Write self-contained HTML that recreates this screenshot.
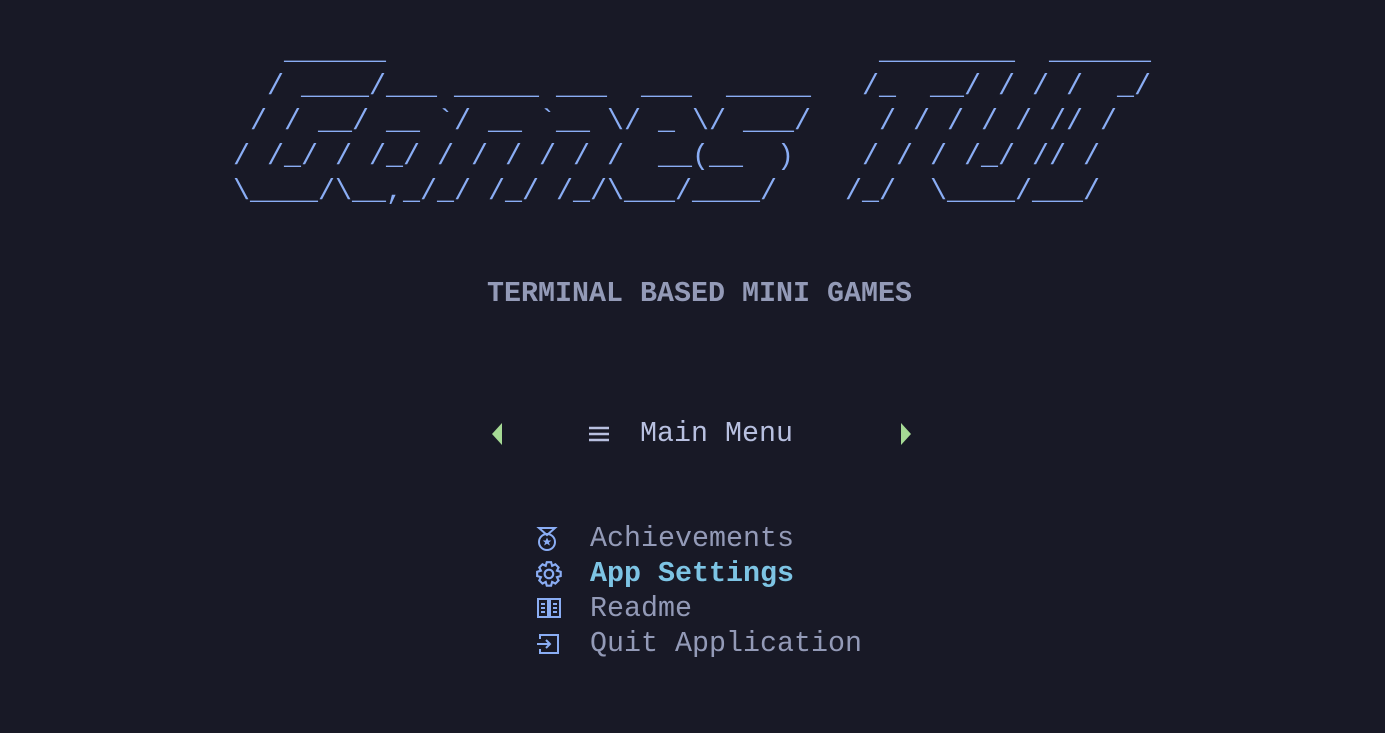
<!DOCTYPE html>
<html><head><meta charset="utf-8"><style>
html,body{margin:0;padding:0;background:#181926;width:1385px;height:733px;overflow:hidden}
.t{position:absolute;margin:0;font-family:"Liberation Mono",monospace;font-size:28.33px;line-height:35px;white-space:pre}
.a{color:#8aadf4;left:233px;top:34px}
svg{position:absolute}
</style></head><body>
<pre class="t a">   ______                             ________  ______
  / ____/___ _____ ___  ___  _____   /_  __/ / / /  _/
 / / __/ __ `/ __ `__ \/ _ \/ ___/    / / / / / // /
/ /_/ / /_/ / / / / / /  __(__  )    / / / /_/ // /
\____/\__,_/_/ /_/ /_/\___/____/    /_/  \____/___/</pre>
<div class="t" style="left:487px;top:276px;color:#939ab7;font-weight:bold">TERMINAL BASED MINI GAMES</div>
<svg style="left:490px;top:422px" width="14" height="24"><path d="M12 1 L2 12 L12 23 Z" fill="#a6da95"/></svg>
<svg style="left:899px;top:422px" width="14" height="24"><path d="M2 1 L12 12 L2 23 Z" fill="#a6da95"/></svg>
<svg style="left:588px;top:425px" width="22" height="18"><path d="M1 3H21M1 9H21M1 15H21" stroke="#b8c0e0" stroke-width="2.4"/></svg>
<div class="t" style="left:640px;top:416px;color:#b8c0e0">Main Menu</div>
<svg style="left:536px;top:526px" width="24" height="26" fill="none" stroke="#8aadf4" stroke-width="2"><path d="M3 2H19L11 9Z"/><circle cx="11" cy="16" r="8"/><path d="M11 11.5l1.3 3h3l-2.4 2 1 3-2.9-1.8-2.9 1.8 1-3-2.4-2h3z" fill="#8aadf4" stroke="none"/></svg>
<div class="t" style="left:590px;top:521px;color:#939ab7">Achievements</div>
<svg style="left:535px;top:560px" width="30" height="30" viewBox="0 0 28 28" fill="none" stroke="#8aadf4" stroke-width="2"><path d="M11 2h4l1 3.5 3-1.5 3 3-1.5 3 3.5 1v4l-3.5 1 1.5 3-3 3-3-1.5-1 3.5h-4l-1-3.5-3 1.5-3-3 1.5-3-3.5-1v-4l3.5-1-1.5-3 3-3 3 1.5z"/><circle cx="13" cy="13" r="4"/></svg>
<div class="t" style="left:590px;top:556px;color:#7dc4e4;font-weight:bold">App Settings</div>
<svg style="left:537px;top:597px" width="26" height="24" fill="none" stroke="#8aadf4" stroke-width="2"><path d="M1 2H11V20H1ZM13 2H23V20H13ZM4 7H8M4 11H8M4 15H8M16 7H20M16 11H20M16 15H20"/></svg>
<div class="t" style="left:590px;top:591px;color:#939ab7">Readme</div>
<svg style="left:536px;top:632px" width="26" height="24" fill="none" stroke="#8aadf4" stroke-width="2"><path d="M4 7V3H22V21H4V17M1 12H14M10 8L14 12L10 16"/></svg>
<div class="t" style="left:590px;top:626px;color:#939ab7">Quit Application</div>
</body></html>
